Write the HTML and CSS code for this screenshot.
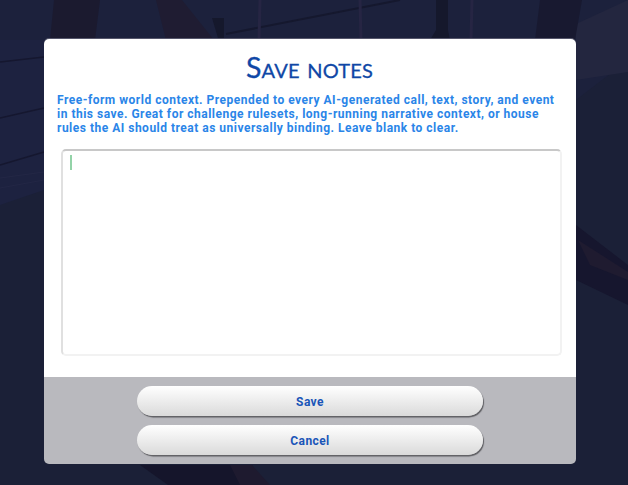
FILE: index.html
```html
<!doctype html>
<html>
  <head>
    <title>Save notes</title>
    <link rel="stylesheet" href="styles.css">
  </head>
  <body>
    <svg class="scene" viewBox="0 0 628 485" aria-hidden="true">
      <path d="M0 0H628V485H0Z" fill="#1b2037"/>
      <!-- deck and rail behind the dialog -->
      <path d="M0 0H628V60L576 100H44L0 205Z" fill="#1c213c"/>
      <path d="M0 40H44V190L0 205Z" fill="#1d2240"/>
      <path d="M576 24L628 0V72L576 80Z" fill="#23263f"/>
      <path d="M54 0H100L95 40H50Z" fill="#1b1a2f"/>
      <path d="M156 0H182L214 40H166Z" fill="#1f1c32"/>
      <path d="M540 0H582L575 40H535Z" fill="#181930"/>
      <path d="M226 34L400 0" stroke="#15182e" stroke-width="2" fill="none"/>
      <path d="M260 0L259 40M360 0L361 40M472 0L471 40" stroke="#262543" stroke-width="3" fill="none"/>
      <path d="M436 0H448V30L450 40H430L436 30Z" fill="#15182c"/>
      <path d="M212 18H224V38H218Z" fill="#15182c"/>
      <path d="M0 62L44 57M0 118L44 108M0 165L44 152" stroke="#15172f" stroke-width="1.5" fill="none"/>
      <path d="M0 178L44 172M0 188L44 180" stroke="#232745" stroke-width="1" fill="none"/>
      <path d="M576 225L628 265V305L576 280Z" fill="#16162e"/>
      <path d="M578 240L628 272V280L590 265Z" fill="#1f1b30"/>
      <path d="M140 465H252L264 485H168Z" fill="#15152b"/>
      <path d="M230 465H252L270 485H240Z" fill="#1e1a2f"/>
    </svg>
    <div class="dialog">
      <div class="body">
        <h1>Save notes</h1>
        <p class="hint">Free-form world context. Prepended to every AI-generated call, text, story, and event in this save. Great for challenge rulesets, long-running narrative context, or house rules the AI should treat as universally binding. Leave blank to clear.</p>
        <div class="notes"><span class="caret"></span></div>
      </div>
      <div class="actions">
        <button>Save</button>
        <button>Cancel</button>
      </div>
    </div>
  </body>
</html>
```

FILE: styles.css
```css
html,
body {
  height: 100%;
}
body {
  margin: 0;
  background-color: #1b2037;
  overflow: hidden;
  font-family: "Liberation Sans", Arial, sans-serif;
  padding: 39px 52px 0 44px;
  box-sizing: border-box;
}
.scene {
  position: absolute;
  top: 0;
  left: 0;
  width: 628px;
  height: 485px;
}
.dialog {
  position: relative;
  height: 425px;
  display: flex;
  flex-direction: column;
  border-radius: 5px;
  overflow: hidden;
  box-shadow: 0 -1px 0 #55566b;
}
.body {
  flex: 1;
  background-color: #fff;
  padding: 12px 14px 21px 13px;
  display: flex;
  flex-direction: column;
}
h1 {
  margin: 0;
  color: #0f47a6;
  font-family: "Lato", sans-serif;
  font-size: 28.5px;
  font-weight: 400;
  font-variant: small-caps;
  letter-spacing: 0.2px;
  -webkit-text-stroke: 0.3px #0f47a6;
  line-height: 32px;
  text-align: center;
}
.hint {
  margin: 10px 0 0;
  color: #2a85e8;
  font-family: "Roboto", sans-serif;
  font-size: 12px;
  font-weight: 700;
  letter-spacing: 0.5px;
  line-height: 14px;
}
.notes {
  flex: 1;
  margin: 14px 0 0 4px;
  border: 2px solid #f2f2f2;
  border-top-color: #c8c8c8;
  border-left-color: #e0e0e0;
  border-radius: 5px;
  padding: 4px 7px;
}
.caret {
  display: block;
  width: 2px;
  height: 15px;
  background-color: #93d3a8;
}
.actions {
  height: 87px;
  box-sizing: border-box;
  background-color: #b9b9be;
  padding-top: 9px;
  display: flex;
  flex-direction: column;
  align-items: center;
  gap: 9px;
}
button {
  width: 346px;
  height: 30px;
  flex: none;
  border: 0;
  border-radius: 15px;
  padding: 2px 0 0;
  background: linear-gradient(#ffffff, #dadada);
  box-shadow: 1px 1.5px 1px #5e5e62;
  color: #1a55b8;
  font-family: "Roboto", sans-serif;
  font-size: 12px;
  font-weight: 700;
  letter-spacing: 0.4px;
  cursor: pointer;
}
```
